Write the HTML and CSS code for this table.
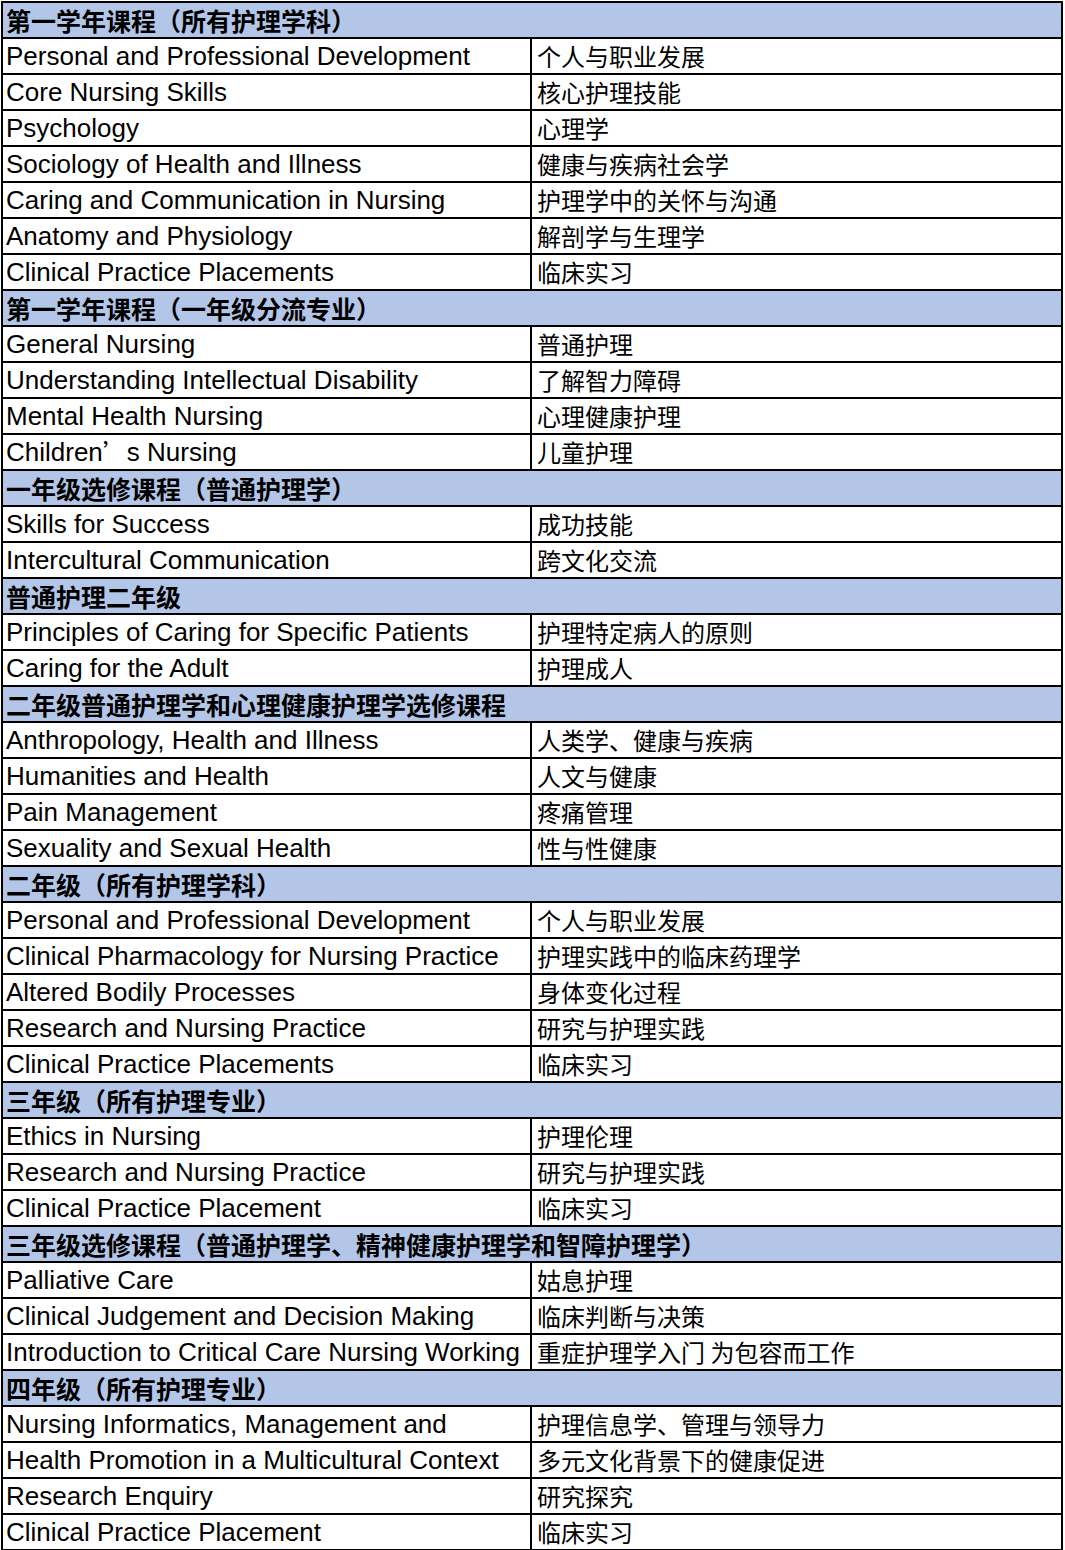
FILE: index.html
```html
<!DOCTYPE html>
<html lang="zh-CN">
<head>
<meta charset="utf-8">
<title>护理课程</title>
<link rel="stylesheet" href="styles.css">
</head>
<body>
<table class="courses">
<colgroup><col class="c-en"><col class="c-zh"></colgroup>
<tbody>
<tr class="sec"><td colspan="2">第一学年课程（所有护理学科）</td></tr>
<tr><td>Personal and Professional Development</td><td>个人与职业发展</td></tr>
<tr><td>Core Nursing Skills</td><td>核心护理技能</td></tr>
<tr><td>Psychology</td><td>心理学</td></tr>
<tr><td>Sociology of Health and Illness</td><td>健康与疾病社会学</td></tr>
<tr><td>Caring and Communication in Nursing</td><td>护理学中的关怀与沟通</td></tr>
<tr><td>Anatomy and Physiology</td><td>解剖学与生理学</td></tr>
<tr><td>Clinical Practice Placements</td><td>临床实习</td></tr>
<tr class="sec"><td colspan="2">第一学年课程（一年级分流专业）</td></tr>
<tr><td>General Nursing</td><td>普通护理</td></tr>
<tr><td>Understanding Intellectual Disability</td><td>了解智力障碍</td></tr>
<tr><td>Mental Health Nursing</td><td>心理健康护理</td></tr>
<tr><td>Children<span class="fw">’</span>s Nursing</td><td>儿童护理</td></tr>
<tr class="sec"><td colspan="2">一年级选修课程（普通护理学）</td></tr>
<tr><td>Skills for Success</td><td>成功技能</td></tr>
<tr><td>Intercultural Communication</td><td>跨文化交流</td></tr>
<tr class="sec"><td colspan="2">普通护理二年级</td></tr>
<tr><td>Principles of Caring for Specific Patients</td><td>护理特定病人的原则</td></tr>
<tr><td>Caring for the Adult</td><td>护理成人</td></tr>
<tr class="sec"><td colspan="2">二年级普通护理学和心理健康护理学选修课程</td></tr>
<tr><td>Anthropology, Health and Illness</td><td>人类学、健康与疾病</td></tr>
<tr><td>Humanities and Health</td><td>人文与健康</td></tr>
<tr><td>Pain Management</td><td>疼痛管理</td></tr>
<tr><td>Sexuality and Sexual Health</td><td>性与性健康</td></tr>
<tr class="sec"><td colspan="2">二年级（所有护理学科）</td></tr>
<tr><td>Personal and Professional Development</td><td>个人与职业发展</td></tr>
<tr><td>Clinical Pharmacology for Nursing Practice</td><td>护理实践中的临床药理学</td></tr>
<tr><td>Altered Bodily Processes</td><td>身体变化过程</td></tr>
<tr><td>Research and Nursing Practice</td><td>研究与护理实践</td></tr>
<tr><td>Clinical Practice Placements</td><td>临床实习</td></tr>
<tr class="sec"><td colspan="2">三年级（所有护理专业）</td></tr>
<tr><td>Ethics in Nursing</td><td>护理伦理</td></tr>
<tr><td>Research and Nursing Practice</td><td>研究与护理实践</td></tr>
<tr><td>Clinical Practice Placement</td><td>临床实习</td></tr>
<tr class="sec"><td colspan="2">三年级选修课程（普通护理学、精神健康护理学和智障护理学）</td></tr>
<tr><td>Palliative Care</td><td>姑息护理</td></tr>
<tr><td>Clinical Judgement and Decision Making</td><td>临床判断与决策</td></tr>
<tr><td>Introduction to Critical Care Nursing Working</td><td>重症护理学入门 为包容而工作</td></tr>
<tr class="sec"><td colspan="2">四年级（所有护理专业）</td></tr>
<tr><td>Nursing Informatics, Management and</td><td>护理信息学、管理与领导力</td></tr>
<tr><td>Health Promotion in a Multicultural Context</td><td>多元文化背景下的健康促进</td></tr>
<tr><td>Research Enquiry</td><td>研究探究</td></tr>
<tr><td>Clinical Practice Placement</td><td>临床实习</td></tr>
</tbody>
</table>
</body>
</html>
```
FILE: styles.css
```css
html, body {
  margin: 0;
  padding: 0;
  background: #ffffff;
}
.courses {
  border-collapse: collapse;
  table-layout: fixed;
  width: 1060px;
  margin-left: 1px;
  margin-top: 1px;
  font-family: "Liberation Sans", "Noto Sans CJK SC", sans-serif;
  font-size: 26px;
  color: #000;
}
.c-en { width: 529px; }
.c-zh { width: 531px; }
.courses td {
  border: 2px solid #000;
  height: 34px;
  padding: 0 0 0 3px;
  line-height: 34px;
  white-space: nowrap;
  overflow: hidden;
  box-sizing: border-box;
  vertical-align: middle;
}
.courses td + td {
  padding-left: 5px;
  font-family: "Noto Sans CJK SC", sans-serif;
  font-size: 24px;
}
.courses tr.sec td {
  background: #b4c6e7;
  font-weight: bold;
  font-family: "Noto Sans CJK SC", sans-serif;
  font-size: 25px;
}
.fw {
  font-family: "Noto Sans CJK SC", sans-serif;
  font-size: 24px;
  line-height: 1;
}
```
